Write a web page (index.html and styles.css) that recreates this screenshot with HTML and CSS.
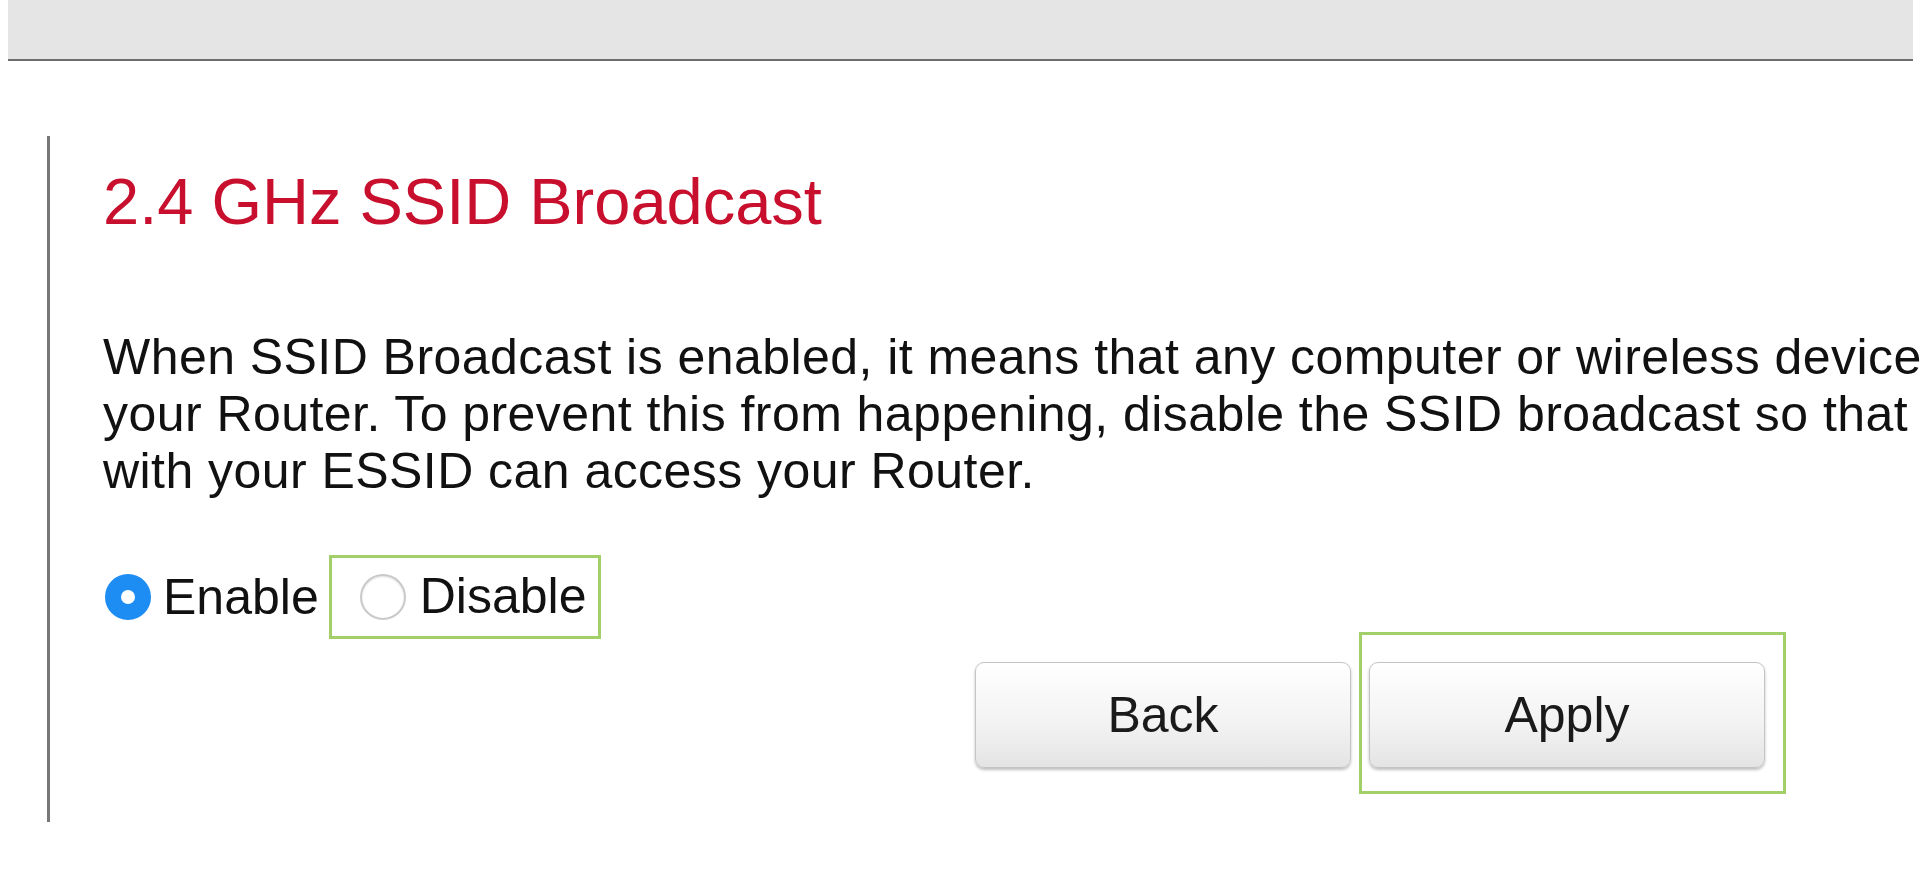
FILE: index.html
```html
<!DOCTYPE html>
<html>
<head>
    <link rel="stylesheet" href="styles.css">
</head>
<body>
<div class="topbar"></div>
<div class="panel">
    <h1 class="title">2.4 GHz SSID Broadcast</h1>
    <p class="desc">When SSID Broadcast is enabled, it means that any computer or wireless device can see<br>your Router. To prevent this from happening, disable the SSID broadcast so that only devices<br>with your ESSID can access your Router.</p>
    <div class="options">
        <label class="option">
            <input type="radio" name="broadcast" checked>
            <span>Enable</span>
        </label>
        <label class="option highlight">
            <input type="radio" name="broadcast">
            <span>Disable</span>
        </label>
    </div>
    <div class="actions">
        <button class="btn back-btn">Back</button>
        <div class="apply-box">
            <button class="btn">Apply</button>
        </div>
    </div>
</div>
</body>
</html>
```

FILE: styles.css
```css
html, body {
    overflow: hidden;
}

body {
    margin: 0;
    padding: 0;
    background-color: #fff;
    font-family: "Liberation Sans", Arial, sans-serif;
    color: #111;
}

.topbar {
    margin: 0 7px 0 8px;
    height: 59px;
    background-color: #e5e5e5;
    border-bottom: 2px solid #6e6e6e;
}

.panel {
    margin: 75px 0 0 47px;
    padding: 28px 0 28px 53px;
    border-left: 3px solid #777;
}

.title {
    margin: 0;
    font-size: 65px;
    line-height: 75px;
    font-weight: normal;
    color: #c8102e;
}

.desc {
    margin: 90px 0 0;
    font-size: 50px;
    line-height: 57px;
    letter-spacing: 0.45px;
    white-space: nowrap;
}

.options {
    display: flex;
    align-items: center;
    margin-top: 55px;
}

.option {
    display: flex;
    align-items: center;
    font-size: 50px;
    line-height: 57px;
}

.option input {
    appearance: none;
    -webkit-appearance: none;
    margin: 0 12px 0 2px;
    width: 46px;
    height: 46px;
    border-radius: 50%;
    border: 2px solid #c9c9c9;
    background-color: #fff;
    box-shadow: inset 0 1px 2px rgba(0, 0, 0, 0.12);
    box-sizing: border-box;
}

.option input:checked {
    border: 16px solid #1d8df3;
    background-color: #fff;
    box-shadow: none;
}

.highlight {
    margin-left: 10px;
    padding: 10px 12px 11px 26px;
    border: 3px solid #a3cf6a;
}

.highlight input {
    margin-right: 14px;
}

.actions {
    display: flex;
    align-items: flex-start;
    margin: -7px 0 0 872px;
}

.btn {
    width: 376px;
    height: 106px;
    font-family: "Liberation Sans", Arial, sans-serif;
    font-size: 50px;
    color: #1a1a1a;
    background: linear-gradient(#ffffff, #f2f2f2 60%, #e4e4e4);
    border: 1px solid #c4c4c4;
    border-radius: 9px;
    box-shadow: 0 2px 3px rgba(0, 0, 0, 0.25);
    cursor: pointer;
}

.back-btn {
    margin-top: 30px;
}

.apply-box {
    margin-left: 8px;
    padding: 27px 18px 23px 7px;
    border: 3px solid #a3cf6a;
}

.apply-box .btn {
    width: 396px;
}
```
